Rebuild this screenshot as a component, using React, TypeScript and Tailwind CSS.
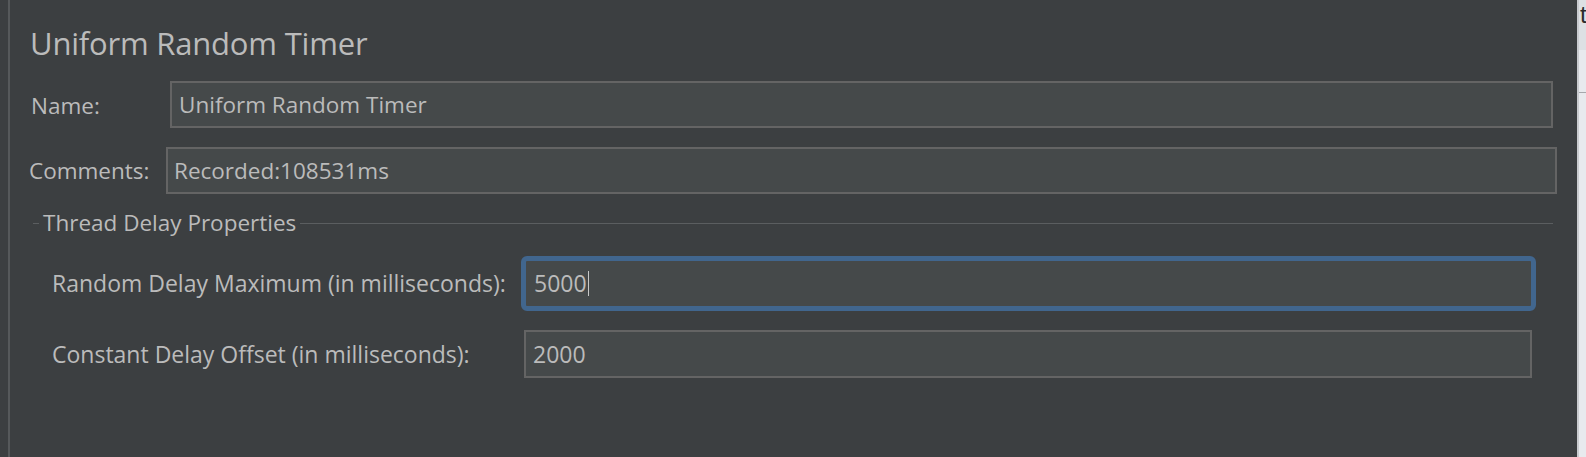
import React from "react";

const font = { fontFamily: '"Open Sans", "Noto Sans", sans-serif' };

export default function App() {
  return (
    <div
      className="w-[1586px] h-[457px] bg-[#3c3f41] flex overflow-hidden text-[#bbbbbb]"
      style={font}
    >
      <div className="w-[8px] shrink-0" />
      <div className="w-[2px] shrink-0 bg-[#56595b]" />
      <div className="flex-1 flex flex-col">
        <div className="h-[23px]" />
        <div className="pl-[20px] h-[40px] text-[31px] leading-[40px] tracking-[-0.2px]">
          Uniform Random Timer
        </div>
        <div className="h-[18px]" />
        {/* Name row */}
        <div className="flex items-center h-[47px]">
          <div className="pl-[21px] w-[160px] shrink-0 text-[22.5px] pt-[3px]">Name:</div>
          <div className="w-[1383px] shrink-0 h-[47px] bg-[#45494a] border-2 border-[#646464] flex items-center pl-[7px] text-[22.5px]">
            Uniform Random Timer
          </div>
        </div>
        <div className="h-[19px]" />
        {/* Comments row */}
        <div className="flex items-center h-[47px]">
          <div className="pl-[19px] w-[156px] shrink-0 text-[22.5px]">Comments:</div>
          <div className="w-[1391px] shrink-0 h-[47px] bg-[#45494a] border-2 border-[#646464] flex items-center pl-[6px] text-[22.5px]">
            Recorded:108531ms
          </div>
        </div>
        <div className="h-[12px]" />
        {/* Group title */}
        <div className="flex items-center h-[34px] mr-[24px] pl-[23px]">
          <div className="w-[6px] h-[1px] bg-[#5b5e60]" />
          <div className="px-[4px] text-[22.5px] leading-[30px]">Thread Delay Properties</div>
          <div className="flex-1 h-[1px] bg-[#5b5e60]" />
        </div>
        <div className="h-[16px]" />
        {/* Random delay row */}
        <div className="flex items-center h-[55px]">
          <div className="pl-[42px] w-[511px] shrink-0 text-[23px]">Random Delay Maximum (in milliseconds):</div>
          <div className="w-[1015px] shrink-0 h-[55px] rounded-[6px] border-[5px] border-[#41668e] bg-[#45494a] flex items-center pl-[8px] text-[23px]">
            <span>5000</span>
            <span className="w-[1.5px] h-[25px] bg-[#c8c8c8] ml-[1px]" />
          </div>
        </div>
        <div className="h-[19px]" />
        {/* Constant delay row */}
        <div className="flex items-center h-[48px]">
          <div className="pl-[42px] w-[514px] shrink-0 text-[23px]">Constant Delay Offset (in milliseconds):</div>
          <div className="w-[1008px] shrink-0 h-[48px] bg-[#45494a] border-2 border-[#646464] flex items-center pl-[7px] text-[23px]">
            2000
          </div>
        </div>
      </div>
      {/* right strip */}
      <div className="w-[9px] shrink-0 flex flex-col border-l-2 border-[#c9cbcf] bg-[#e8eaee] overflow-hidden">
        <div className="h-[50px] bg-[#dde0e4] text-[#2b2b2b] text-[24px] leading-[30px] pl-[1px]" style={{ fontFamily: '"Liberation Sans", sans-serif' }}>
          t
        </div>
        <div className="h-[43px] border-b border-[#a6a8ac]" />
        <div className="flex-1" />
      </div>
    </div>
  );
}
